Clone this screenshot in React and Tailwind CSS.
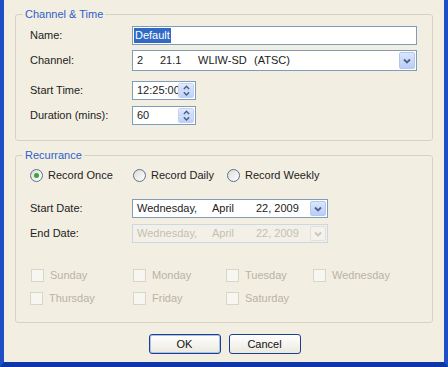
// App.jsx
const font = { fontFamily: '"Liberation Sans", Arial, sans-serif' };

function Chevron({ down = true, disabled = false, size = 8 }) {
  return (
    <svg width={size} height={size * 0.75} viewBox="0 0 8 6">
      <path
        d={down ? "M1 1.5 L4 4.5 L7 1.5" : "M1 4.5 L4 1.5 L7 4.5"}
        fill="none"
        stroke={disabled ? "#c9c7ba" : "#4d6185"}
        strokeWidth="1.8"
      />
    </svg>
  );
}

function DropButton({ disabled }) {
  return (
    <div
      className={`flex h-full w-[16px] items-center justify-center rounded-[2px] border ${
        disabled ? "border-[#e3e1d6] bg-[#f4f2ea]" : "border-[#b5c6ef] bg-gradient-to-b from-[#dbe6fd] to-[#b9cdf7]"
      }`}
    >
      <Chevron disabled={disabled} />
    </div>
  );
}

function Spin() {
  return (
    <div className="flex h-full w-[16px] flex-col overflow-hidden rounded-[2px] border border-[#c3d1f2]">
      <div className="flex flex-1 items-center justify-center bg-gradient-to-b from-[#e2ebfd] to-[#c8d7f8]">
        <Chevron down={false} size={7} />
      </div>
      <div className="flex flex-1 items-center justify-center bg-gradient-to-b from-[#d3e0fb] to-[#bccff7]">
        <Chevron size={7} />
      </div>
    </div>
  );
}

function Radio({ checked, label, className = "" }) {
  return (
    <div className={`flex items-center ${className}`}>
      <div className="flex h-[13px] w-[13px] items-center justify-center rounded-full border border-[#5b7190] bg-gradient-to-br from-[#dcdcd6] to-white">
        {checked && <div className="h-[5px] w-[5px] rounded-full bg-[#3ba33b]" />}
      </div>
      <span className="ml-[5px]">{label}</span>
    </div>
  );
}

function Check({ label, className = "" }) {
  return (
    <div className={`flex items-center text-[#b8b4a4] ${className}`}>
      <div className="h-[13px] w-[13px] border border-[#d8d6ca] bg-[#f7f6f0]" />
      <span className="ml-[6px]">{label}</span>
    </div>
  );
}

function Group({ title, className = "", children }) {
  return (
    <div className={`relative mx-[11px] rounded-[3px] border border-[#d6d3c2] ${className}`}>
      <span className="absolute left-[7px] top-[-8px] bg-[#f2eee1] px-[2px] leading-[14px] text-[#2f5fc9]">{title}</span>
      {children}
    </div>
  );
}

function DateField({ disabled }) {
  return (
    <div
      className={`flex h-[19px] w-[196px] items-center border pr-[1px] ${
        disabled ? "border-[#cdd6e4] bg-[#f3f1e7] text-[#c3c0b2]" : "border-[#7f9db9] bg-white"
      }`}
    >
      <span className="ml-[4px] w-[75px]">Wednesday,</span>
      <span className="w-[44px]">April</span>
      <span className="flex-1">22, 2009</span>
      <div className="h-[15px]">
        <DropButton disabled={disabled} />
      </div>
    </div>
  );
}

export default function App() {
  return (
    <div
      style={font}
      className="flex h-[367px] w-[448px] flex-col border-x-4 border-b-[5px] border-x-[#1f4fc6] border-b-[#0f36a8] bg-[#f2eee1] text-[11px] text-[#222]"
    >
      <Group title="Channel & Time" className="mt-[14px] h-[127px]">
        <div className="pl-[14px] pr-[15px] pt-[11px]">
          <div className="flex h-[19px] items-center">
            <span className="w-[102px]">Name:</span>
            <div className="flex h-full flex-1 items-center border border-[#7f9db9] bg-white px-[1px]">
              <span className="bg-[#316ac5] px-[1px] leading-[15px] text-white">Default</span>
            </div>
          </div>
          <div className="mt-[5px] flex h-[21px] items-center">
            <span className="w-[102px]">Channel:</span>
            <div className="flex h-full flex-1 items-center border border-[#7f9db9] bg-white pr-[1px] whitespace-pre">
              <span className="ml-[4px] w-[23px]">2</span>
              <span className="w-[38px]">21.1</span>
              <span className="w-[56px]">WLIW-SD</span>
              <span className="flex-1">(ATSC)</span>
              <div className="h-[17px]">
                <DropButton />
              </div>
            </div>
          </div>
          <div className="mt-[10px] flex h-[19px] items-center">
            <span className="w-[102px]">Start Time:</span>
            <div className="flex h-full w-[64px] items-center border border-[#7f9db9] bg-white py-[1px] pr-[1px]">
              <span className="ml-[4px] w-[41px] overflow-hidden whitespace-nowrap">12:25:00</span>
              <Spin />
            </div>
          </div>
          <div className="mt-[6px] flex h-[19px] items-center">
            <span className="w-[102px]">Duration (mins):</span>
            <div className="flex h-full w-[64px] items-center border border-[#7f9db9] bg-white py-[1px] pr-[1px]">
              <span className="ml-[4px] flex-1">60</span>
              <Spin />
            </div>
          </div>
        </div>
      </Group>

      <Group title="Recurrance" className="mt-[14px] h-[168px]">
        <div className="pl-[14px] pr-[15px] pt-[13px]">
          <div className="flex h-[13px] items-center">
            <Radio checked label="Record Once" className="w-[103px]" />
            <Radio label="Record Daily" className="w-[94px]" />
            <Radio label="Record Weekly" />
          </div>
          <div className="mt-[17px] flex items-center">
            <span className="w-[102px]">Start Date:</span>
            <DateField />
          </div>
          <div className="mt-[6px] flex items-center">
            <span className="w-[102px]">End Date:</span>
            <DateField disabled />
          </div>
          <div className="mt-[26px] flex h-[13px] items-center">
            <Check label="Sunday" className="ml-[1px] w-[102px]" />
            <Check label="Monday" className="w-[93px]" />
            <Check label="Tuesday" className="w-[87px]" />
            <Check label="Wednesday" />
          </div>
          <div className="mt-[10px] flex h-[13px] items-center">
            <Check label="Thursday" className="w-[103px]" />
            <Check label="Friday" className="w-[93px]" />
            <Check label="Saturday" />
          </div>
        </div>
      </Group>

      <div className="mt-[11px] flex justify-center gap-[8px] pl-[1px]">
        <button className="h-[20px] w-[72px] rounded-[3px] border border-[#1c3f8c] bg-gradient-to-b from-white to-[#ebe9df] shadow-[inset_0_0_0_1px_#a9c3ef] text-[#111]">
          OK
        </button>
        <button className="h-[20px] w-[72px] rounded-[3px] border border-[#1c3f8c] bg-gradient-to-b from-white to-[#ebe9df] text-[#111]">
          Cancel
        </button>
      </div>
    </div>
  );
}
